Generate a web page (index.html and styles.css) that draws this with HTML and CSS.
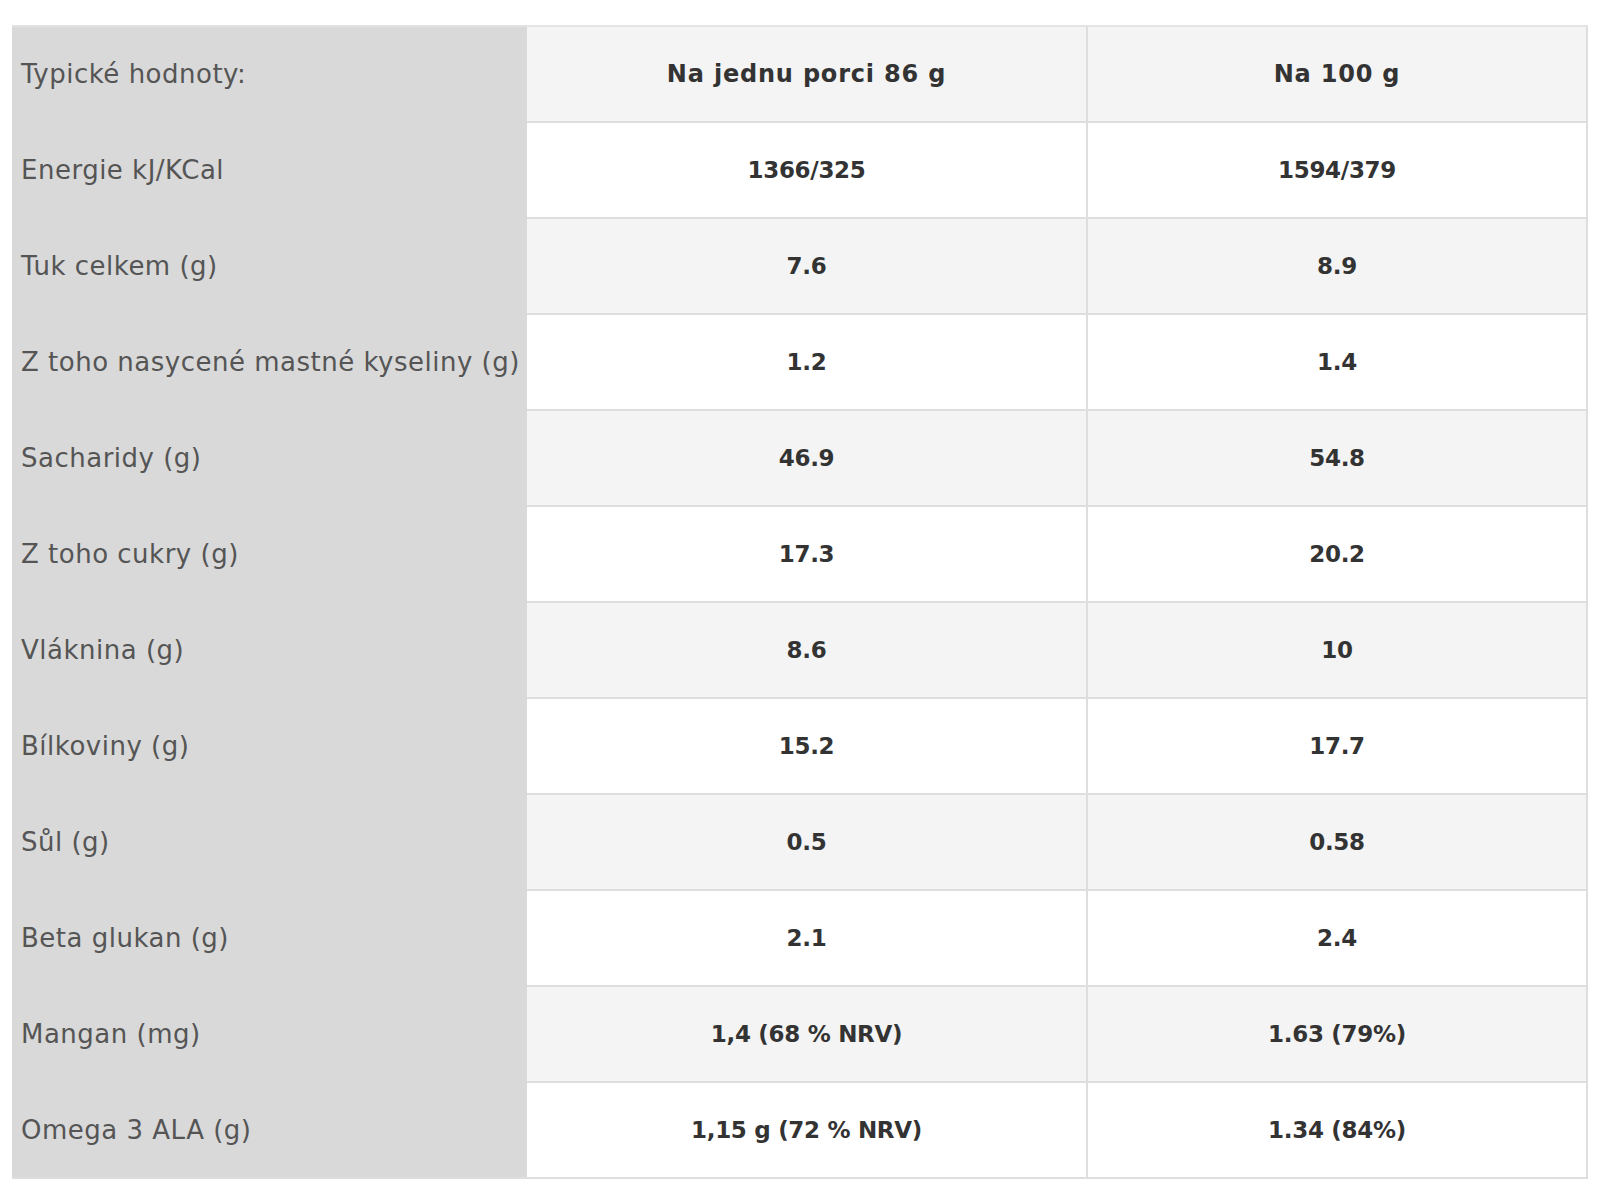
FILE: index.html
```html
<!DOCTYPE html>
<html lang="cs">
<head>
<meta charset="utf-8">
<title>Nutriční hodnoty</title>
<link rel="stylesheet" href="styles.css">
</head>
<body>
<div class="nutri">
  <div class="cell label">Typické hodnoty:</div>
  <div class="cell val head odd">Na jednu porci 86 g</div>
  <div class="cell val head odd last">Na 100 g</div>

  <div class="cell label">Energie kJ/KCal</div>
  <div class="cell val">1366/325</div>
  <div class="cell val last">1594/379</div>

  <div class="cell label">Tuk celkem (g)</div>
  <div class="cell val odd">7.6</div>
  <div class="cell val odd last">8.9</div>

  <div class="cell label">Z toho nasycené mastné kyseliny (g)</div>
  <div class="cell val">1.2</div>
  <div class="cell val last">1.4</div>

  <div class="cell label">Sacharidy (g)</div>
  <div class="cell val odd">46.9</div>
  <div class="cell val odd last">54.8</div>

  <div class="cell label">Z toho cukry (g)</div>
  <div class="cell val">17.3</div>
  <div class="cell val last">20.2</div>

  <div class="cell label">Vláknina (g)</div>
  <div class="cell val odd">8.6</div>
  <div class="cell val odd last">10</div>

  <div class="cell label">Bílkoviny (g)</div>
  <div class="cell val">15.2</div>
  <div class="cell val last">17.7</div>

  <div class="cell label">Sůl (g)</div>
  <div class="cell val odd">0.5</div>
  <div class="cell val odd last">0.58</div>

  <div class="cell label">Beta glukan (g)</div>
  <div class="cell val">2.1</div>
  <div class="cell val last">2.4</div>

  <div class="cell label">Mangan (mg)</div>
  <div class="cell val odd">1,4 (68 % NRV)</div>
  <div class="cell val odd last">1.63 (79%)</div>

  <div class="cell label">Omega 3 ALA (g)</div>
  <div class="cell val">1,15 g (72 % NRV)</div>
  <div class="cell val last">1.34 (84%)</div>
</div>
</body>
</html>
```
FILE: styles.css
```css
html, body {
  margin: 0;
  padding: 0;
  background: #ffffff;
}

body {
  font-family: "DejaVu Sans", "Liberation Sans", sans-serif;
  font-size: 24px;
  padding: 25px 0 0 12px;
}

.nutri {
  display: grid;
  grid-template-columns: 515px 559px 502px;
  width: 1576px;
  border-bottom: 2px solid #dedede;
}

.cell {
  box-sizing: border-box;
  height: 96px;
  display: flex;
  align-items: center;
  border-top: 2px solid #dedede;
}

.label {
  background: #d9d9d9;
  color: #555555;
  font-size: 26px;
  padding-left: 9px;
  border-top-color: #d9d9d9;
  letter-spacing: 0.5px;
}

.label:first-child {
  border-top-color: #e2e2e2;
}

.val {
  background: #ffffff;
  color: #333333;
  font-weight: 700;
  font-size: 23px;
  letter-spacing: -0.3px;
  justify-content: center;
}

.val.last {
  border-left: 2px solid #dedede;
  border-right: 2px solid #dedede;
}

.val.odd {
  background: #f4f4f4;
}

.val.head {
  font-size: 24px;
  letter-spacing: 0.8px;
  border-top-color: #e4e4e4;
}
```
